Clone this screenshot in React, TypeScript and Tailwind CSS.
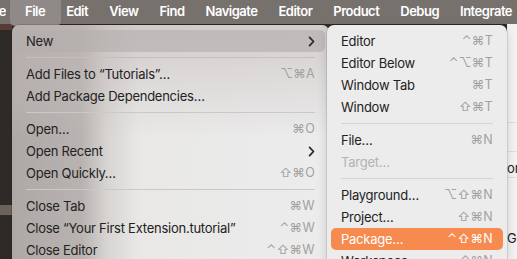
import React from "react";

type RowProps = {
  label: string;
  shortcut?: string;
  chevron?: boolean;
  variant?: "normal" | "gray" | "orange" | "disabled";
};

const Chevron = ({ className }: { className?: string }) => (
  <svg width="7" height="11" viewBox="0 0 7 11" className={className}>
    <path d="M1.6 1.4 L5.5 5.5 L1.6 9.6" fill="none" stroke="currentColor" strokeWidth="1.8" strokeLinecap="round" strokeLinejoin="round" />
  </svg>
);

const Row = ({ label, shortcut, chevron, variant = "normal" }: RowProps) => {
  const bg =
    variant === "gray"
      ? "bg-[#b3aeac]/60"
      : variant === "orange"
      ? "bg-[#f68a4f]"
      : "";
  const text =
    variant === "orange"
      ? "text-white"
      : variant === "disabled"
      ? "text-[#b3b3b3]"
      : "text-[#222222]";
  const sc = variant === "orange" ? "text-white" : "text-[#a3a09e]";
  return (
    <div className={`h-[22px] flex items-center justify-between pl-[10px] pr-[10px] rounded-[5px] ${bg}`}>
      <span className={`text-[13px] tracking-[-0.25px] leading-none whitespace-nowrap ${text}`}>{label}</span>
      {shortcut && (
        <span className={`text-[12.5px] leading-none whitespace-nowrap tracking-[0.3px] ${sc}`}>{shortcut}</span>
      )}
      {chevron && <Chevron className="text-[#2a2a2a]" />}
    </div>
  );
};

const Sep = ({ color }: { color: string }) => (
  <div className={`my-[5px] mx-[10px] h-px ${color}`} />
);

export default function App() {
  const bar = ["File", "Edit", "View", "Find", "Navigate", "Editor", "Product", "Debug", "Integrate"];
  return (
    <div
      className="relative w-[517px] h-[259px] overflow-hidden bg-[#2e2a27]"
      style={{ fontFamily: "Inter, 'Noto Sans', 'DejaVu Sans', sans-serif" }}
    >
      {/* menubar */}
      <div className="h-[24px] flex items-center bg-[#77716e] text-white text-[13px] font-semibold tracking-[-0.5px] whitespace-nowrap">
        <div className="w-[6px] shrink-0 overflow-hidden flex justify-end">
          <span>Xcode</span>
        </div>
        <div className="flex items-center gap-[21px] ml-[19px]">
          {bar.map((b) =>
            b === "File" ? (
              <span key={b} className="relative">
                <span className="absolute -left-[15px] -right-[16px] -top-[5px] -bottom-[4px] rounded-[5px] bg-[#8f8a87]" />
                <span className="relative">{b}</span>
              </span>
            ) : (
              <span key={b}>{b}</span>
            )
          )}
        </div>
      </div>

      {/* background content */}
      <div className="flex h-[235px]">
        <div className="flex-1 flex flex-col">
          <div className="h-[6px] w-[12px] bg-[#5a3b34]" />
          <div className="h-[175px]" />
          <div className="h-[10px] w-[12px] bg-[#6b6259]" />
        </div>
        <div className="w-[10px] bg-[#f3f3f3] flex flex-col text-[13px] text-[#222]">
          <div className="h-[99px] border-b border-[#e0e0e0]" />
          <div className="h-[29px] border-b border-[#e0e0e0]" />
          <div className="h-[26px] border-b border-[#e0e0e0] flex items-end leading-none pb-[2px] overflow-hidden">
            <span>or</span>
          </div>
          <div className="h-[54px]" />
          <div className="leading-none overflow-hidden">Go</div>
        </div>
      </div>

      {/* main menu */}
      <div className="absolute left-[12px] top-[25px] w-[317px] h-[250px] rounded-[7px] px-[4px] pt-[5px] bg-[linear-gradient(90deg,#aea9a6_0%,#b8b3b0_22%,#d7d4d2_30%,#e9e8e7_40%,#ececec_100%)] shadow-[0_0_0_0.5px_rgba(0,0,0,0.25)]">
        <div className="absolute inset-0 rounded-[7px] bg-[linear-gradient(180deg,rgba(190,180,180,0.55)_0%,rgba(200,192,192,0.25)_30%,rgba(255,255,255,0)_45%)]" />
        <div className="relative">
          <Row label="New" chevron variant="gray" />
          <Sep color="bg-[#c3bfbd]" />
          <Row label="Add Files to “Tutorials”…" shortcut="⌥⌘A" />
          <Row label="Add Package Dependencies…" />
          <Sep color="bg-[#cbc8c6]" />
          <Row label="Open…" shortcut="⌘O" />
          <Row label="Open Recent" chevron />
          <Row label="Open Quickly…" shortcut="⇧⌘O" />
          <Sep color="bg-[#cbc8c6]" />
          <Row label="Close Tab" shortcut="⌘W" />
          <Row label="Close “Your First Extension.tutorial”" shortcut="⌃⌘W" />
          <Row label="Close Editor" shortcut="⌃⇧⌘W" />
        </div>
      </div>

      {/* submenu */}
      <div className="absolute left-[327px] top-[25px] w-[180px] h-[260px] rounded-[7px] px-[4px] pt-[5px] bg-[#ececec] shadow-[0_0_0_0.5px_rgba(0,0,0,0.2),0_4px_12px_rgba(0,0,0,0.15)]">
        <Row label="Editor" shortcut="⌃⌘T" />
        <Row label="Editor Below" shortcut="⌃⌥⌘T" />
        <Row label="Window Tab" shortcut="⌘T" />
        <Row label="Window" shortcut="⇧⌘T" />
        <Sep color="bg-[#d5d5d5]" />
        <Row label="File…" shortcut="⌘N" />
        <Row label="Target…" variant="disabled" />
        <Sep color="bg-[#d5d5d5]" />
        <Row label="Playground…" shortcut="⌥⇧⌘N" />
        <Row label="Project…" shortcut="⇧⌘N" />
        <Row label="Package…" shortcut="⌃⇧⌘N" variant="orange" />
        <Row label="Workspace…" shortcut="⌃⌘N" />
      </div>
    </div>
  );
}
